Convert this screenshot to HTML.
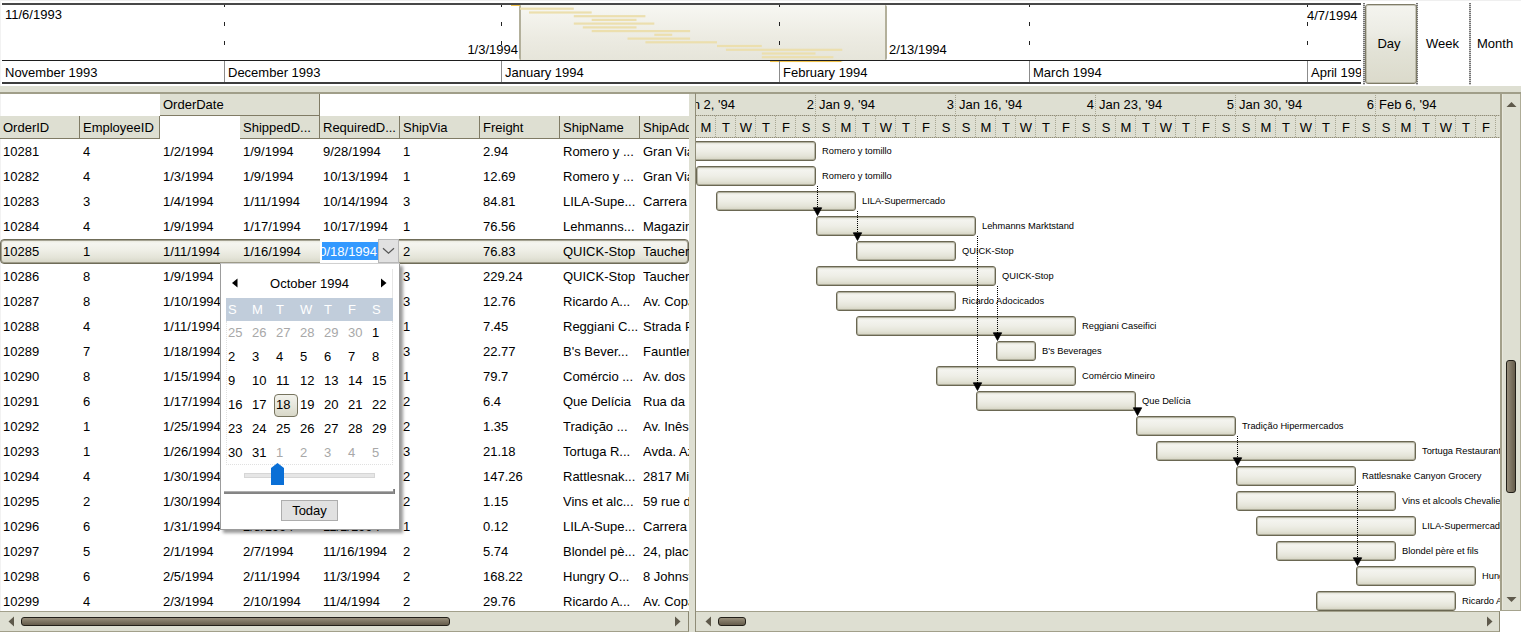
<!DOCTYPE html><html><head><meta charset="utf-8"><style>
*{margin:0;padding:0;box-sizing:border-box}
html,body{width:1521px;height:632px;overflow:hidden;background:#fff}
body{position:relative;font-family:"Liberation Sans", sans-serif;font-size:13px;color:#000}
.a{position:absolute}
.t{position:absolute;white-space:pre;line-height:15px}
.c{position:absolute;overflow:hidden;white-space:pre;line-height:25px;height:25px}
.bar{position:absolute;height:20px;border:1px solid #6a6752;border-radius:3px;box-shadow:inset 0 0 0 1px rgba(120,117,95,0.45);
background:linear-gradient(#dcdccf 0px,#f4f4ef 3px,#eeeee6 9px,#e4e4d8 14px,#d8d7c7 17px)}
.lbl{position:absolute;font-size:9.3px;line-height:11px;white-space:pre;color:#000}
.dh{position:absolute;width:1px;background:repeating-linear-gradient(#a8a692 0 1px,transparent 1px 2px)}
.dw{position:absolute;height:1px;background:repeating-linear-gradient(90deg,#8f8c78 0 1px,#c4c2b2 1px 2px)}
</style></head><body>

<div class="a" style="left:0;top:0;width:1521px;height:1px;background:#efefef"></div>
<div class="a" style="left:0;top:0;width:1px;height:632px;background:#f2f2f2"></div>
<div class="a" style="left:2px;top:3px;width:1359px;height:2px;background:#484848"></div>
<div class="a" style="left:519px;top:5px;width:368px;height:55px;border-left:2px solid #b3b09b;border-right:2px solid #b3b09b;border-radius:2px;background:linear-gradient(#f7f7f2,#ecebe2 60%,#e6e5da)"></div>
<svg class="a" style="left:0;top:0" width="1521" height="90"><rect x="520.1" y="7.6" width="53.7" height="2.2" fill="#ecdfae"/><rect x="529.0" y="11.4" width="62.7" height="2.2" fill="#ecdfae"/><rect x="573.8" y="15.1" width="71.6" height="2.2" fill="#ecdfae"/><rect x="591.7" y="18.8" width="44.8" height="2.2" fill="#ecdfae"/><rect x="573.8" y="22.5" width="80.5" height="2.2" fill="#ecdfae"/><rect x="582.8" y="26.3" width="53.7" height="2.2" fill="#ecdfae"/><rect x="591.7" y="30.0" width="98.4" height="2.2" fill="#ecdfae"/><rect x="654.3" y="33.7" width="17.9" height="2.2" fill="#ecdfae"/><rect x="627.5" y="37.5" width="62.6" height="2.2" fill="#ecdfae"/><rect x="645.4" y="41.2" width="71.6" height="2.2" fill="#ecdfae"/><rect x="717.0" y="44.9" width="44.8" height="2.2" fill="#ecdfae"/><rect x="725.9" y="48.7" width="116.4" height="2.2" fill="#ecdfae"/><rect x="761.8" y="52.4" width="53.7" height="2.2" fill="#ecdfae"/><rect x="761.8" y="56.1" width="71.6" height="2.2" fill="#ecdfae"/><rect x="770.7" y="59.9" width="71.6" height="2.2" fill="#ecdfae"/></svg>
<div class="a" style="left:511px;top:5px;width:9px;height:1px;background:#f1c24a"></div>
<div class="a" style="left:770px;top:61px;width:71px;height:1px;background:#f1c24a"></div>
<div class="a" style="left:224px;top:5px;width:1px;height:2px;background:#222"></div>
<div class="a" style="left:224px;top:22px;width:1px;height:4px;background:#222"></div>
<div class="a" style="left:224px;top:41px;width:1px;height:4px;background:#222"></div>
<div class="a" style="left:501px;top:5px;width:1px;height:2px;background:#222"></div>
<div class="a" style="left:501px;top:22px;width:1px;height:4px;background:#222"></div>
<div class="a" style="left:501px;top:41px;width:1px;height:4px;background:#222"></div>
<div class="a" style="left:779px;top:5px;width:1px;height:2px;background:#222"></div>
<div class="a" style="left:779px;top:22px;width:1px;height:4px;background:#222"></div>
<div class="a" style="left:779px;top:41px;width:1px;height:4px;background:#222"></div>
<div class="a" style="left:1029px;top:5px;width:1px;height:2px;background:#222"></div>
<div class="a" style="left:1029px;top:22px;width:1px;height:4px;background:#222"></div>
<div class="a" style="left:1029px;top:41px;width:1px;height:4px;background:#222"></div>
<div class="a" style="left:1307px;top:5px;width:1px;height:2px;background:#222"></div>
<div class="a" style="left:1307px;top:22px;width:1px;height:4px;background:#222"></div>
<div class="a" style="left:1307px;top:41px;width:1px;height:4px;background:#222"></div>
<div class="t" style="left:5px;top:7px">11/6/1993</div>
<div class="t" style="left:460px;top:42px;width:58px;text-align:right">1/3/1994</div>
<div class="t" style="left:889px;top:42px">2/13/1994</div>
<div class="t" style="left:1307px;top:8px">4/7/1994</div>
<div class="a" style="left:2px;top:60px;width:1359px;height:1px;background:#1e1e1e"></div>
<div class="a" style="left:2px;top:61px;width:1359px;height:21px;overflow:hidden">
<div class="t" style="left:3px;top:4px">November 1993</div>
<div class="a" style="left:222px;top:0;width:1px;height:21px;background:#8c8c8c"></div>
<div class="t" style="left:226px;top:4px">December 1993</div>
<div class="a" style="left:499px;top:0;width:1px;height:21px;background:#8c8c8c"></div>
<div class="t" style="left:503px;top:4px">January 1994</div>
<div class="a" style="left:777px;top:0;width:1px;height:21px;background:#8c8c8c"></div>
<div class="t" style="left:781px;top:4px">February 1994</div>
<div class="a" style="left:1027px;top:0;width:1px;height:21px;background:#8c8c8c"></div>
<div class="t" style="left:1031px;top:4px">March 1994</div>
<div class="a" style="left:1305px;top:0;width:1px;height:21px;background:#8c8c8c"></div>
<div class="t" style="left:1309px;top:4px">April 1994</div>
</div>
<div class="a" style="left:2px;top:82px;width:1359px;height:2px;background:#3c3c3c"></div>
<div class="a" style="left:1363px;top:3px;width:2px;height:82px;background:repeating-linear-gradient(#5a5a5a 0 1px,#c8c8c8 1px 2px);opacity:0.85"></div>
<div class="a" style="left:1416px;top:3px;width:2px;height:82px;background:repeating-linear-gradient(#5a5a5a 0 1px,#c8c8c8 1px 2px);opacity:0.85"></div>
<div class="a" style="left:1469px;top:3px;width:2px;height:82px;background:repeating-linear-gradient(#5a5a5a 0 1px,#c8c8c8 1px 2px);opacity:0.85"></div>
<div class="a" style="left:1365px;top:4px;width:52px;height:80px;border:1px solid #7f7c67;box-shadow:inset 0 0 0 1px rgba(127,124,103,0.35);border-radius:3px;background:linear-gradient(#f4f4ef,#ecece4 35%,#e2e2d6 60%,#dbdacb)"></div>
<div class="t" style="left:1363px;top:36px;width:52px;text-align:center">Day</div>
<div class="t" style="left:1426px;top:36px">Week</div>
<div class="t" style="left:1477px;top:36px">Month</div>
<div class="a" style="left:0;top:86px;width:1521px;height:6px;background:#dedfd2"></div>
<div class="a" style="left:0;top:92px;width:1521px;height:2px;background:#a09e89"></div>
<div class="a" style="left:0;top:93px;width:689px;height:518px;overflow:hidden">
<div class="a" style="left:160px;top:0;width:160px;height:23px;background:#dedfd2;border-right:1px solid #807b65;border-bottom:1px solid #807b65"></div>
<div class="t" style="left:163px;top:4px">OrderDate</div>
<div class="a" style="left:0px;top:23px;width:80px;height:23px;background:#dedfd2;border-right:1px solid #807b65;border-bottom:1px solid #807b65;overflow:hidden"><div class="t" style="left:3px;top:4px">OrderID</div></div>
<div class="a" style="left:80px;top:23px;width:80px;height:23px;background:#dedfd2;border-right:1px solid #807b65;border-bottom:1px solid #807b65;overflow:hidden"><div class="t" style="left:3px;top:4px">EmployeeID</div></div>
<div class="a" style="left:240px;top:23px;width:80px;height:23px;background:#dedfd2;border-right:1px solid #807b65;border-bottom:1px solid #807b65;overflow:hidden"><div class="t" style="left:3px;top:4px">ShippedD...</div></div>
<div class="a" style="left:320px;top:23px;width:80px;height:23px;background:#dedfd2;border-right:1px solid #807b65;border-bottom:1px solid #807b65;overflow:hidden"><div class="t" style="left:3px;top:4px">RequiredD...</div></div>
<div class="a" style="left:400px;top:23px;width:80px;height:23px;background:#dedfd2;border-right:1px solid #807b65;border-bottom:1px solid #807b65;overflow:hidden"><div class="t" style="left:3px;top:4px">ShipVia</div></div>
<div class="a" style="left:480px;top:23px;width:80px;height:23px;background:#dedfd2;border-right:1px solid #807b65;border-bottom:1px solid #807b65;overflow:hidden"><div class="t" style="left:3px;top:4px">Freight</div></div>
<div class="a" style="left:560px;top:23px;width:80px;height:23px;background:#dedfd2;border-right:1px solid #807b65;border-bottom:1px solid #807b65;overflow:hidden"><div class="t" style="left:3px;top:4px">ShipName</div></div>
<div class="a" style="left:640px;top:23px;width:80px;height:23px;background:#dedfd2;border-right:1px solid #807b65;border-bottom:1px solid #807b65;overflow:hidden"><div class="t" style="left:3px;top:4px">ShipAddress</div></div>
<div class="c" style="left:3px;top:46px;width:77px">10281</div>
<div class="c" style="left:83px;top:46px;width:77px">4</div>
<div class="c" style="left:163px;top:46px;width:77px">1/2/1994</div>
<div class="c" style="left:243px;top:46px;width:77px">1/9/1994</div>
<div class="c" style="left:323px;top:46px;width:77px">9/28/1994</div>
<div class="c" style="left:403px;top:46px;width:77px">1</div>
<div class="c" style="left:483px;top:46px;width:77px">2.94</div>
<div class="c" style="left:563px;top:46px;width:77px">Romero y ...</div>
<div class="c" style="left:643px;top:46px;width:77px">Gran Via, 1</div>
<div class="c" style="left:3px;top:71px;width:77px">10282</div>
<div class="c" style="left:83px;top:71px;width:77px">4</div>
<div class="c" style="left:163px;top:71px;width:77px">1/3/1994</div>
<div class="c" style="left:243px;top:71px;width:77px">1/9/1994</div>
<div class="c" style="left:323px;top:71px;width:77px">10/13/1994</div>
<div class="c" style="left:403px;top:71px;width:77px">1</div>
<div class="c" style="left:483px;top:71px;width:77px">12.69</div>
<div class="c" style="left:563px;top:71px;width:77px">Romero y ...</div>
<div class="c" style="left:643px;top:71px;width:77px">Gran Via, 1</div>
<div class="c" style="left:3px;top:96px;width:77px">10283</div>
<div class="c" style="left:83px;top:96px;width:77px">3</div>
<div class="c" style="left:163px;top:96px;width:77px">1/4/1994</div>
<div class="c" style="left:243px;top:96px;width:77px">1/11/1994</div>
<div class="c" style="left:323px;top:96px;width:77px">10/14/1994</div>
<div class="c" style="left:403px;top:96px;width:77px">3</div>
<div class="c" style="left:483px;top:96px;width:77px">84.81</div>
<div class="c" style="left:563px;top:96px;width:77px">LILA-Supe...</div>
<div class="c" style="left:643px;top:96px;width:77px">Carrera 52</div>
<div class="c" style="left:3px;top:121px;width:77px">10284</div>
<div class="c" style="left:83px;top:121px;width:77px">4</div>
<div class="c" style="left:163px;top:121px;width:77px">1/9/1994</div>
<div class="c" style="left:243px;top:121px;width:77px">1/17/1994</div>
<div class="c" style="left:323px;top:121px;width:77px">10/17/1994</div>
<div class="c" style="left:403px;top:121px;width:77px">1</div>
<div class="c" style="left:483px;top:121px;width:77px">76.56</div>
<div class="c" style="left:563px;top:121px;width:77px">Lehmanns...</div>
<div class="c" style="left:643px;top:121px;width:77px">Magazinweg</div>
<div class="a" style="left:0;top:146px;width:689px;height:25px;border:1px solid #6f6c58;border-radius:4px;box-shadow:inset 0 0 0 1px rgba(111,108,88,0.55);background:linear-gradient(#e4e4d8 0,#f5f5f0 3px,#efefe7 10px,#e3e3d7 18px,#d6d5c5 23px)"></div>
<div class="c" style="left:3px;top:146px;width:77px">10285</div>
<div class="c" style="left:83px;top:146px;width:77px">1</div>
<div class="c" style="left:163px;top:146px;width:77px">1/11/1994</div>
<div class="c" style="left:243px;top:146px;width:77px">1/16/1994</div>
<div class="c" style="left:323px;top:146px;width:77px">10/18/1994</div>
<div class="c" style="left:403px;top:146px;width:77px">2</div>
<div class="c" style="left:483px;top:146px;width:77px">76.83</div>
<div class="c" style="left:563px;top:146px;width:77px">QUICK-Stop</div>
<div class="c" style="left:643px;top:146px;width:77px">Taucherstr</div>
<div class="c" style="left:3px;top:171px;width:77px">10286</div>
<div class="c" style="left:83px;top:171px;width:77px">8</div>
<div class="c" style="left:163px;top:171px;width:77px">1/9/1994</div>
<div class="c" style="left:243px;top:171px;width:77px">1/18/1994</div>
<div class="c" style="left:323px;top:171px;width:77px">10/19/1994</div>
<div class="c" style="left:403px;top:171px;width:77px">3</div>
<div class="c" style="left:483px;top:171px;width:77px">229.24</div>
<div class="c" style="left:563px;top:171px;width:77px">QUICK-Stop</div>
<div class="c" style="left:643px;top:171px;width:77px">Taucherstr</div>
<div class="c" style="left:3px;top:196px;width:77px">10287</div>
<div class="c" style="left:83px;top:196px;width:77px">8</div>
<div class="c" style="left:163px;top:196px;width:77px">1/10/1994</div>
<div class="c" style="left:243px;top:196px;width:77px">1/16/1994</div>
<div class="c" style="left:323px;top:196px;width:77px">10/20/1994</div>
<div class="c" style="left:403px;top:196px;width:77px">3</div>
<div class="c" style="left:483px;top:196px;width:77px">12.76</div>
<div class="c" style="left:563px;top:196px;width:77px">Ricardo A...</div>
<div class="c" style="left:643px;top:196px;width:77px">Av. Copacab</div>
<div class="c" style="left:3px;top:221px;width:77px">10288</div>
<div class="c" style="left:83px;top:221px;width:77px">4</div>
<div class="c" style="left:163px;top:221px;width:77px">1/11/1994</div>
<div class="c" style="left:243px;top:221px;width:77px">1/22/1994</div>
<div class="c" style="left:323px;top:221px;width:77px">10/21/1994</div>
<div class="c" style="left:403px;top:221px;width:77px">1</div>
<div class="c" style="left:483px;top:221px;width:77px">7.45</div>
<div class="c" style="left:563px;top:221px;width:77px">Reggiani C...</div>
<div class="c" style="left:643px;top:221px;width:77px">Strada Prov</div>
<div class="c" style="left:3px;top:246px;width:77px">10289</div>
<div class="c" style="left:83px;top:246px;width:77px">7</div>
<div class="c" style="left:163px;top:246px;width:77px">1/18/1994</div>
<div class="c" style="left:243px;top:246px;width:77px">1/20/1994</div>
<div class="c" style="left:323px;top:246px;width:77px">10/24/1994</div>
<div class="c" style="left:403px;top:246px;width:77px">3</div>
<div class="c" style="left:483px;top:246px;width:77px">22.77</div>
<div class="c" style="left:563px;top:246px;width:77px">B's Bever...</div>
<div class="c" style="left:643px;top:246px;width:77px">Fauntleroy</div>
<div class="c" style="left:3px;top:271px;width:77px">10290</div>
<div class="c" style="left:83px;top:271px;width:77px">8</div>
<div class="c" style="left:163px;top:271px;width:77px">1/15/1994</div>
<div class="c" style="left:243px;top:271px;width:77px">1/22/1994</div>
<div class="c" style="left:323px;top:271px;width:77px">10/25/1994</div>
<div class="c" style="left:403px;top:271px;width:77px">1</div>
<div class="c" style="left:483px;top:271px;width:77px">79.7</div>
<div class="c" style="left:563px;top:271px;width:77px">Comércio ...</div>
<div class="c" style="left:643px;top:271px;width:77px">Av. dos Lus</div>
<div class="c" style="left:3px;top:296px;width:77px">10291</div>
<div class="c" style="left:83px;top:296px;width:77px">6</div>
<div class="c" style="left:163px;top:296px;width:77px">1/17/1994</div>
<div class="c" style="left:243px;top:296px;width:77px">1/25/1994</div>
<div class="c" style="left:323px;top:296px;width:77px">10/26/1994</div>
<div class="c" style="left:403px;top:296px;width:77px">2</div>
<div class="c" style="left:483px;top:296px;width:77px">6.4</div>
<div class="c" style="left:563px;top:296px;width:77px">Que Delícia</div>
<div class="c" style="left:643px;top:296px;width:77px">Rua da Pan</div>
<div class="c" style="left:3px;top:321px;width:77px">10292</div>
<div class="c" style="left:83px;top:321px;width:77px">1</div>
<div class="c" style="left:163px;top:321px;width:77px">1/25/1994</div>
<div class="c" style="left:243px;top:321px;width:77px">1/30/1994</div>
<div class="c" style="left:323px;top:321px;width:77px">10/27/1994</div>
<div class="c" style="left:403px;top:321px;width:77px">2</div>
<div class="c" style="left:483px;top:321px;width:77px">1.35</div>
<div class="c" style="left:563px;top:321px;width:77px">Tradição ...</div>
<div class="c" style="left:643px;top:321px;width:77px">Av. Inês de</div>
<div class="c" style="left:3px;top:346px;width:77px">10293</div>
<div class="c" style="left:83px;top:346px;width:77px">1</div>
<div class="c" style="left:163px;top:346px;width:77px">1/26/1994</div>
<div class="c" style="left:243px;top:346px;width:77px">2/8/1994</div>
<div class="c" style="left:323px;top:346px;width:77px">10/28/1994</div>
<div class="c" style="left:403px;top:346px;width:77px">3</div>
<div class="c" style="left:483px;top:346px;width:77px">21.18</div>
<div class="c" style="left:563px;top:346px;width:77px">Tortuga R...</div>
<div class="c" style="left:643px;top:346px;width:77px">Avda. Azteca</div>
<div class="c" style="left:3px;top:371px;width:77px">10294</div>
<div class="c" style="left:83px;top:371px;width:77px">4</div>
<div class="c" style="left:163px;top:371px;width:77px">1/30/1994</div>
<div class="c" style="left:243px;top:371px;width:77px">2/5/1994</div>
<div class="c" style="left:323px;top:371px;width:77px">10/31/1994</div>
<div class="c" style="left:403px;top:371px;width:77px">2</div>
<div class="c" style="left:483px;top:371px;width:77px">147.26</div>
<div class="c" style="left:563px;top:371px;width:77px">Rattlesnak...</div>
<div class="c" style="left:643px;top:371px;width:77px">2817 Milton</div>
<div class="c" style="left:3px;top:396px;width:77px">10295</div>
<div class="c" style="left:83px;top:396px;width:77px">2</div>
<div class="c" style="left:163px;top:396px;width:77px">1/30/1994</div>
<div class="c" style="left:243px;top:396px;width:77px">2/7/1994</div>
<div class="c" style="left:323px;top:396px;width:77px">11/1/1994</div>
<div class="c" style="left:403px;top:396px;width:77px">2</div>
<div class="c" style="left:483px;top:396px;width:77px">1.15</div>
<div class="c" style="left:563px;top:396px;width:77px">Vins et alc...</div>
<div class="c" style="left:643px;top:396px;width:77px">59 rue de l</div>
<div class="c" style="left:3px;top:421px;width:77px">10296</div>
<div class="c" style="left:83px;top:421px;width:77px">6</div>
<div class="c" style="left:163px;top:421px;width:77px">1/31/1994</div>
<div class="c" style="left:243px;top:421px;width:77px">2/8/1994</div>
<div class="c" style="left:323px;top:421px;width:77px">11/1/1994</div>
<div class="c" style="left:403px;top:421px;width:77px">1</div>
<div class="c" style="left:483px;top:421px;width:77px">0.12</div>
<div class="c" style="left:563px;top:421px;width:77px">LILA-Supe...</div>
<div class="c" style="left:643px;top:421px;width:77px">Carrera 52</div>
<div class="c" style="left:3px;top:446px;width:77px">10297</div>
<div class="c" style="left:83px;top:446px;width:77px">5</div>
<div class="c" style="left:163px;top:446px;width:77px">2/1/1994</div>
<div class="c" style="left:243px;top:446px;width:77px">2/7/1994</div>
<div class="c" style="left:323px;top:446px;width:77px">11/16/1994</div>
<div class="c" style="left:403px;top:446px;width:77px">2</div>
<div class="c" style="left:483px;top:446px;width:77px">5.74</div>
<div class="c" style="left:563px;top:446px;width:77px">Blondel pè...</div>
<div class="c" style="left:643px;top:446px;width:77px">24, place K</div>
<div class="c" style="left:3px;top:471px;width:77px">10298</div>
<div class="c" style="left:83px;top:471px;width:77px">6</div>
<div class="c" style="left:163px;top:471px;width:77px">2/5/1994</div>
<div class="c" style="left:243px;top:471px;width:77px">2/11/1994</div>
<div class="c" style="left:323px;top:471px;width:77px">11/3/1994</div>
<div class="c" style="left:403px;top:471px;width:77px">2</div>
<div class="c" style="left:483px;top:471px;width:77px">168.22</div>
<div class="c" style="left:563px;top:471px;width:77px">Hungry O...</div>
<div class="c" style="left:643px;top:471px;width:77px">8 Johnstown</div>
<div class="c" style="left:3px;top:496px;width:77px">10299</div>
<div class="c" style="left:83px;top:496px;width:77px">4</div>
<div class="c" style="left:163px;top:496px;width:77px">2/3/1994</div>
<div class="c" style="left:243px;top:496px;width:77px">2/10/1994</div>
<div class="c" style="left:323px;top:496px;width:77px">11/4/1994</div>
<div class="c" style="left:403px;top:496px;width:77px">2</div>
<div class="c" style="left:483px;top:496px;width:77px">29.76</div>
<div class="c" style="left:563px;top:496px;width:77px">Ricardo A...</div>
<div class="c" style="left:643px;top:496px;width:77px">Av. Copacab</div>
</div>
<div class="a" style="left:689px;top:93px;width:6px;height:539px;background:#dedfd2"></div>
<div class="a" style="left:695px;top:93px;width:1px;height:539px;background:#8a8772"></div>
<div class="a" style="left:696px;top:93px;width:804px;height:518px;overflow:hidden">
<div class="a" style="left:0;top:0;width:804px;height:45px;background:#dedfd2"></div>
<div class="t" style="left:-17px;top:4px">Jan 2, '94</div>
<div class="t" style="left:80px;top:4px;width:38px;text-align:right">2</div>
<div class="dh" style="left:119px;top:0;height:23px"></div>
<div class="t" style="left:123px;top:4px">Jan 9, '94</div>
<div class="t" style="left:220px;top:4px;width:38px;text-align:right">3</div>
<div class="dh" style="left:259px;top:0;height:23px"></div>
<div class="t" style="left:263px;top:4px">Jan 16, '94</div>
<div class="t" style="left:360px;top:4px;width:38px;text-align:right">4</div>
<div class="dh" style="left:399px;top:0;height:23px"></div>
<div class="t" style="left:403px;top:4px">Jan 23, '94</div>
<div class="t" style="left:500px;top:4px;width:38px;text-align:right">5</div>
<div class="dh" style="left:539px;top:0;height:23px"></div>
<div class="t" style="left:543px;top:4px">Jan 30, '94</div>
<div class="t" style="left:640px;top:4px;width:38px;text-align:right">6</div>
<div class="dh" style="left:679px;top:0;height:23px"></div>
<div class="t" style="left:683px;top:4px">Feb 6, '94</div>
<div class="t" style="left:780px;top:4px;width:38px;text-align:right">7</div>
<div class="dw" style="left:0;top:22px;width:804px"></div>
<div class="t" style="left:-20px;top:27px;width:20px;text-align:center">S</div>
<div class="dh" style="left:-1px;top:23px;height:22px"></div>
<div class="t" style="left:0px;top:27px;width:20px;text-align:center">M</div>
<div class="dh" style="left:19px;top:23px;height:22px"></div>
<div class="t" style="left:20px;top:27px;width:20px;text-align:center">T</div>
<div class="dh" style="left:39px;top:23px;height:22px"></div>
<div class="t" style="left:40px;top:27px;width:20px;text-align:center">W</div>
<div class="dh" style="left:59px;top:23px;height:22px"></div>
<div class="t" style="left:60px;top:27px;width:20px;text-align:center">T</div>
<div class="dh" style="left:79px;top:23px;height:22px"></div>
<div class="t" style="left:80px;top:27px;width:20px;text-align:center">F</div>
<div class="dh" style="left:99px;top:23px;height:22px"></div>
<div class="t" style="left:100px;top:27px;width:20px;text-align:center">S</div>
<div class="dh" style="left:119px;top:23px;height:22px"></div>
<div class="t" style="left:120px;top:27px;width:20px;text-align:center">S</div>
<div class="dh" style="left:139px;top:23px;height:22px"></div>
<div class="t" style="left:140px;top:27px;width:20px;text-align:center">M</div>
<div class="dh" style="left:159px;top:23px;height:22px"></div>
<div class="t" style="left:160px;top:27px;width:20px;text-align:center">T</div>
<div class="dh" style="left:179px;top:23px;height:22px"></div>
<div class="t" style="left:180px;top:27px;width:20px;text-align:center">W</div>
<div class="dh" style="left:199px;top:23px;height:22px"></div>
<div class="t" style="left:200px;top:27px;width:20px;text-align:center">T</div>
<div class="dh" style="left:219px;top:23px;height:22px"></div>
<div class="t" style="left:220px;top:27px;width:20px;text-align:center">F</div>
<div class="dh" style="left:239px;top:23px;height:22px"></div>
<div class="t" style="left:240px;top:27px;width:20px;text-align:center">S</div>
<div class="dh" style="left:259px;top:23px;height:22px"></div>
<div class="t" style="left:260px;top:27px;width:20px;text-align:center">S</div>
<div class="dh" style="left:279px;top:23px;height:22px"></div>
<div class="t" style="left:280px;top:27px;width:20px;text-align:center">M</div>
<div class="dh" style="left:299px;top:23px;height:22px"></div>
<div class="t" style="left:300px;top:27px;width:20px;text-align:center">T</div>
<div class="dh" style="left:319px;top:23px;height:22px"></div>
<div class="t" style="left:320px;top:27px;width:20px;text-align:center">W</div>
<div class="dh" style="left:339px;top:23px;height:22px"></div>
<div class="t" style="left:340px;top:27px;width:20px;text-align:center">T</div>
<div class="dh" style="left:359px;top:23px;height:22px"></div>
<div class="t" style="left:360px;top:27px;width:20px;text-align:center">F</div>
<div class="dh" style="left:379px;top:23px;height:22px"></div>
<div class="t" style="left:380px;top:27px;width:20px;text-align:center">S</div>
<div class="dh" style="left:399px;top:23px;height:22px"></div>
<div class="t" style="left:400px;top:27px;width:20px;text-align:center">S</div>
<div class="dh" style="left:419px;top:23px;height:22px"></div>
<div class="t" style="left:420px;top:27px;width:20px;text-align:center">M</div>
<div class="dh" style="left:439px;top:23px;height:22px"></div>
<div class="t" style="left:440px;top:27px;width:20px;text-align:center">T</div>
<div class="dh" style="left:459px;top:23px;height:22px"></div>
<div class="t" style="left:460px;top:27px;width:20px;text-align:center">W</div>
<div class="dh" style="left:479px;top:23px;height:22px"></div>
<div class="t" style="left:480px;top:27px;width:20px;text-align:center">T</div>
<div class="dh" style="left:499px;top:23px;height:22px"></div>
<div class="t" style="left:500px;top:27px;width:20px;text-align:center">F</div>
<div class="dh" style="left:519px;top:23px;height:22px"></div>
<div class="t" style="left:520px;top:27px;width:20px;text-align:center">S</div>
<div class="dh" style="left:539px;top:23px;height:22px"></div>
<div class="t" style="left:540px;top:27px;width:20px;text-align:center">S</div>
<div class="dh" style="left:559px;top:23px;height:22px"></div>
<div class="t" style="left:560px;top:27px;width:20px;text-align:center">M</div>
<div class="dh" style="left:579px;top:23px;height:22px"></div>
<div class="t" style="left:580px;top:27px;width:20px;text-align:center">T</div>
<div class="dh" style="left:599px;top:23px;height:22px"></div>
<div class="t" style="left:600px;top:27px;width:20px;text-align:center">W</div>
<div class="dh" style="left:619px;top:23px;height:22px"></div>
<div class="t" style="left:620px;top:27px;width:20px;text-align:center">T</div>
<div class="dh" style="left:639px;top:23px;height:22px"></div>
<div class="t" style="left:640px;top:27px;width:20px;text-align:center">F</div>
<div class="dh" style="left:659px;top:23px;height:22px"></div>
<div class="t" style="left:660px;top:27px;width:20px;text-align:center">S</div>
<div class="dh" style="left:679px;top:23px;height:22px"></div>
<div class="t" style="left:680px;top:27px;width:20px;text-align:center">S</div>
<div class="dh" style="left:699px;top:23px;height:22px"></div>
<div class="t" style="left:700px;top:27px;width:20px;text-align:center">M</div>
<div class="dh" style="left:719px;top:23px;height:22px"></div>
<div class="t" style="left:720px;top:27px;width:20px;text-align:center">T</div>
<div class="dh" style="left:739px;top:23px;height:22px"></div>
<div class="t" style="left:740px;top:27px;width:20px;text-align:center">W</div>
<div class="dh" style="left:759px;top:23px;height:22px"></div>
<div class="t" style="left:760px;top:27px;width:20px;text-align:center">T</div>
<div class="dh" style="left:779px;top:23px;height:22px"></div>
<div class="t" style="left:780px;top:27px;width:20px;text-align:center">F</div>
<div class="dh" style="left:799px;top:23px;height:22px"></div>
<div class="t" style="left:800px;top:27px;width:20px;text-align:center">S</div>
<div class="dh" style="left:819px;top:23px;height:22px"></div>
<div class="t" style="left:820px;top:27px;width:20px;text-align:center">S</div>
<div class="dw" style="left:0;top:44px;width:804px"></div>
<div class="bar" style="left:-20px;top:48px;width:140px"></div>
<div class="lbl" style="left:126px;top:53px">Romero y tomillo</div>
<div class="bar" style="left:0px;top:73px;width:120px"></div>
<div class="lbl" style="left:126px;top:78px">Romero y tomillo</div>
<div class="bar" style="left:20px;top:98px;width:140px"></div>
<div class="lbl" style="left:166px;top:103px">LILA-Supermercado</div>
<div class="bar" style="left:120px;top:123px;width:160px"></div>
<div class="lbl" style="left:286px;top:128px">Lehmanns Marktstand</div>
<div class="bar" style="left:160px;top:148px;width:100px"></div>
<div class="lbl" style="left:266px;top:153px">QUICK-Stop</div>
<div class="bar" style="left:120px;top:173px;width:180px"></div>
<div class="lbl" style="left:306px;top:178px">QUICK-Stop</div>
<div class="bar" style="left:140px;top:198px;width:120px"></div>
<div class="lbl" style="left:266px;top:203px">Ricardo Adocicados</div>
<div class="bar" style="left:160px;top:223px;width:220px"></div>
<div class="lbl" style="left:386px;top:228px">Reggiani Caseifici</div>
<div class="bar" style="left:300px;top:248px;width:40px"></div>
<div class="lbl" style="left:346px;top:253px">B's Beverages</div>
<div class="bar" style="left:240px;top:273px;width:140px"></div>
<div class="lbl" style="left:386px;top:278px">Comércio Mineiro</div>
<div class="bar" style="left:280px;top:298px;width:160px"></div>
<div class="lbl" style="left:446px;top:303px">Que Delícia</div>
<div class="bar" style="left:440px;top:323px;width:100px"></div>
<div class="lbl" style="left:546px;top:328px">Tradição Hipermercados</div>
<div class="bar" style="left:460px;top:348px;width:260px"></div>
<div class="lbl" style="left:726px;top:353px">Tortuga Restaurante</div>
<div class="bar" style="left:540px;top:373px;width:120px"></div>
<div class="lbl" style="left:666px;top:378px">Rattlesnake Canyon Grocery</div>
<div class="bar" style="left:540px;top:398px;width:160px"></div>
<div class="lbl" style="left:706px;top:403px">Vins et alcools Chevalier</div>
<div class="bar" style="left:560px;top:423px;width:160px"></div>
<div class="lbl" style="left:726px;top:428px">LILA-Supermercado</div>
<div class="bar" style="left:580px;top:448px;width:120px"></div>
<div class="lbl" style="left:706px;top:453px">Blondel père et fils</div>
<div class="bar" style="left:660px;top:473px;width:120px"></div>
<div class="lbl" style="left:786px;top:478px">Hungry Owl All-Night Grocers</div>
<div class="bar" style="left:620px;top:498px;width:140px"></div>
<div class="lbl" style="left:766px;top:503px">Ricardo Adocicados</div>
<div class="a" style="left:121px;top:93px;width:1px;height:22px;background:repeating-linear-gradient(#000 0 1px,transparent 1px 2px)"></div>
<svg class="a" style="left:116px;top:114px" width="11" height="10"><path d="M1.3 0.8 L9.7 0.8 L5.5 8.5 Z" fill="#000" stroke="#000" stroke-width="0.8" stroke-linejoin="round"/></svg>
<div class="a" style="left:161px;top:118px;width:1px;height:22px;background:repeating-linear-gradient(#000 0 1px,transparent 1px 2px)"></div>
<svg class="a" style="left:156px;top:139px" width="11" height="10"><path d="M1.3 0.8 L9.7 0.8 L5.5 8.5 Z" fill="#000" stroke="#000" stroke-width="0.8" stroke-linejoin="round"/></svg>
<div class="a" style="left:281px;top:143px;width:1px;height:147px;background:repeating-linear-gradient(#000 0 1px,transparent 1px 2px)"></div>
<svg class="a" style="left:276px;top:289px" width="11" height="10"><path d="M1.3 0.8 L9.7 0.8 L5.5 8.5 Z" fill="#000" stroke="#000" stroke-width="0.8" stroke-linejoin="round"/></svg>
<div class="a" style="left:301px;top:193px;width:1px;height:47px;background:repeating-linear-gradient(#000 0 1px,transparent 1px 2px)"></div>
<svg class="a" style="left:296px;top:239px" width="11" height="10"><path d="M1.3 0.8 L9.7 0.8 L5.5 8.5 Z" fill="#000" stroke="#000" stroke-width="0.8" stroke-linejoin="round"/></svg>
<div class="a" style="left:441px;top:318px;width:1px;height:-3px;background:repeating-linear-gradient(#000 0 1px,transparent 1px 2px)"></div>
<svg class="a" style="left:436px;top:314px" width="11" height="10"><path d="M1.3 0.8 L9.7 0.8 L5.5 8.5 Z" fill="#000" stroke="#000" stroke-width="0.8" stroke-linejoin="round"/></svg>
<div class="a" style="left:541px;top:343px;width:1px;height:22px;background:repeating-linear-gradient(#000 0 1px,transparent 1px 2px)"></div>
<svg class="a" style="left:536px;top:364px" width="11" height="10"><path d="M1.3 0.8 L9.7 0.8 L5.5 8.5 Z" fill="#000" stroke="#000" stroke-width="0.8" stroke-linejoin="round"/></svg>
<div class="a" style="left:661px;top:393px;width:1px;height:72px;background:repeating-linear-gradient(#000 0 1px,transparent 1px 2px)"></div>
<svg class="a" style="left:656px;top:464px" width="11" height="10"><path d="M1.3 0.8 L9.7 0.8 L5.5 8.5 Z" fill="#000" stroke="#000" stroke-width="0.8" stroke-linejoin="round"/></svg>
</div>
<div class="a" style="left:1500px;top:93px;width:21px;height:518px;background:#dedfd2;border-left:2px solid #a3a08a;border-right:1px solid #aeac97;border-bottom:1px solid #a5a38e;box-shadow:inset 1px 0 0 #e8e8dd"></div>
<svg class="a" style="left:1506px;top:101px" width="11" height="7"><path d="M0.5 6 L5.5 1 L10.5 6 Z" fill="#5e594b"/></svg>
<svg class="a" style="left:1506px;top:596px" width="11" height="7"><path d="M0.5 1 L5.5 6 L10.5 1 Z" fill="#5e594b"/></svg>
<div class="a" style="left:1506px;top:360px;width:10px;height:133px;border:1px solid #221f18;border-radius:3px;background:linear-gradient(90deg,#978e7b,#7d7462 50%,#655c4b)"></div>
<div class="a" style="left:0px;top:611px;width:689px;height:21px;background:#dedfd2;border-top:1px solid #a2a08b;border-bottom:1px solid #a2a08b;border-right:1px solid #8a8772"></div>
<div class="a" style="left:696px;top:611px;width:804px;height:21px;background:#dedfd2;border-top:1px solid #a2a08b;border-bottom:1px solid #a2a08b;border-right:1px solid #8a8772"></div>
<svg class="a" style="left:7px;top:616px" width="8" height="11"><path d="M7 0.5 L1.5 5.5 L7 10.5 Z" fill="#5e594b"/></svg>
<svg class="a" style="left:674px;top:616px" width="8" height="11"><path d="M1 0.5 L6.5 5.5 L1 10.5 Z" fill="#5e594b"/></svg>
<svg class="a" style="left:704px;top:616px" width="8" height="11"><path d="M7 0.5 L1.5 5.5 L7 10.5 Z" fill="#5e594b"/></svg>
<svg class="a" style="left:1486px;top:616px" width="8" height="11"><path d="M1 0.5 L6.5 5.5 L1 10.5 Z" fill="#5e594b"/></svg>
<div class="a" style="left:21px;top:617px;width:429px;height:9px;border:1px solid #221f18;border-radius:3px;background:linear-gradient(#978e7b,#7d7462 50%,#655c4b)"></div>
<div class="a" style="left:718px;top:617px;width:28px;height:9px;border:1px solid #221f18;border-radius:3px;background:linear-gradient(#978e7b,#7d7462 50%,#655c4b)"></div>
<div class="a" style="left:320px;top:238px;width:79px;height:26px;background:#fff;overflow:hidden;border-bottom:1px solid #c4c4c4">
<div class="a" style="left:2px;top:4px;width:56px;height:18px;background:#3399ff"></div>
<div class="a" style="left:2px;top:0;width:56px;height:26px;overflow:hidden"><div class="t" style="left:-10px;top:6px;color:#fff">10/18/1994</div></div>
<div class="a" style="left:58px;top:1px;width:21px;height:24px;background:#e1e1e1;border:1px solid #b8b8b8"></div>
<svg class="a" style="left:62px;top:9px" width="13" height="8"><path d="M1 1.2 L6.5 6.2 L12 1.2" stroke="#555" stroke-width="1.2" fill="none"/></svg>
</div>
<div class="a" style="left:220px;top:263px;width:180px;height:267px;background:#fff;border:1px solid #9c9c9c;border-top:1px solid #d0d0d0;box-shadow:3px 3px 3px rgba(0,0,0,0.4)"></div>
<div class="a" style="left:392px;top:269px;width:1px;height:29px;background:#e6e6e6"></div>
<svg class="a" style="left:231px;top:278px" width="8" height="11"><path d="M6.5 0.5 L1 5 L6.5 9.5 Z" fill="#000"/></svg>
<svg class="a" style="left:380px;top:278px" width="8" height="11"><path d="M1 0.5 L6.5 5 L1 9.5 Z" fill="#000"/></svg>
<div class="t" style="left:226px;top:276px;width:167px;text-align:center">October 1994</div>
<div class="a" style="left:226px;top:298px;width:167px;height:23px;background:#c1cddb"></div>
<div class="t" style="left:228px;top:302px;color:#fff">S</div>
<div class="t" style="left:252px;top:302px;color:#fff">M</div>
<div class="t" style="left:276px;top:302px;color:#fff">T</div>
<div class="t" style="left:300px;top:302px;color:#fff">W</div>
<div class="t" style="left:324px;top:302px;color:#fff">T</div>
<div class="t" style="left:348px;top:302px;color:#fff">F</div>
<div class="t" style="left:372px;top:302px;color:#fff">S</div>
<div class="t" style="left:228px;top:325px;color:#a8a8a8">25</div>
<div class="t" style="left:252px;top:325px;color:#a8a8a8">26</div>
<div class="t" style="left:276px;top:325px;color:#a8a8a8">27</div>
<div class="t" style="left:300px;top:325px;color:#a8a8a8">28</div>
<div class="t" style="left:324px;top:325px;color:#a8a8a8">29</div>
<div class="t" style="left:348px;top:325px;color:#a8a8a8">30</div>
<div class="t" style="left:372px;top:325px;color:#000">1</div>
<div class="t" style="left:228px;top:349px;color:#000">2</div>
<div class="t" style="left:252px;top:349px;color:#000">3</div>
<div class="t" style="left:276px;top:349px;color:#000">4</div>
<div class="t" style="left:300px;top:349px;color:#000">5</div>
<div class="t" style="left:324px;top:349px;color:#000">6</div>
<div class="t" style="left:348px;top:349px;color:#000">7</div>
<div class="t" style="left:372px;top:349px;color:#000">8</div>
<div class="t" style="left:228px;top:373px;color:#000">9</div>
<div class="t" style="left:252px;top:373px;color:#000">10</div>
<div class="t" style="left:276px;top:373px;color:#000">11</div>
<div class="t" style="left:300px;top:373px;color:#000">12</div>
<div class="t" style="left:324px;top:373px;color:#000">13</div>
<div class="t" style="left:348px;top:373px;color:#000">14</div>
<div class="t" style="left:372px;top:373px;color:#000">15</div>
<div class="t" style="left:228px;top:397px;color:#000">16</div>
<div class="t" style="left:252px;top:397px;color:#000">17</div>
<div class="a" style="left:274px;top:394px;width:24px;height:23px;border:1px solid #77745f;border-radius:4px;background:linear-gradient(#f2f2ec,#e4e4d8 60%,#d8d7c8)"></div>
<div class="t" style="left:276px;top:397px;color:#000">18</div>
<div class="t" style="left:300px;top:397px;color:#000">19</div>
<div class="t" style="left:324px;top:397px;color:#000">20</div>
<div class="t" style="left:348px;top:397px;color:#000">21</div>
<div class="t" style="left:372px;top:397px;color:#000">22</div>
<div class="t" style="left:228px;top:421px;color:#000">23</div>
<div class="t" style="left:252px;top:421px;color:#000">24</div>
<div class="t" style="left:276px;top:421px;color:#000">25</div>
<div class="t" style="left:300px;top:421px;color:#000">26</div>
<div class="t" style="left:324px;top:421px;color:#000">27</div>
<div class="t" style="left:348px;top:421px;color:#000">28</div>
<div class="t" style="left:372px;top:421px;color:#000">29</div>
<div class="t" style="left:228px;top:445px;color:#000">30</div>
<div class="t" style="left:252px;top:445px;color:#000">31</div>
<div class="t" style="left:276px;top:445px;color:#a8a8a8">1</div>
<div class="t" style="left:300px;top:445px;color:#a8a8a8">2</div>
<div class="t" style="left:324px;top:445px;color:#a8a8a8">3</div>
<div class="t" style="left:348px;top:445px;color:#a8a8a8">4</div>
<div class="t" style="left:372px;top:445px;color:#a8a8a8">5</div>
<div class="a" style="left:226px;top:321px;width:167px;height:144px;border:1px dotted #e0e0e0;border-top:none"></div>
<div class="a" style="left:244px;top:473px;width:131px;height:5px;background:#e6e6e6;border:1px solid #d6d6d6"></div>
<svg class="a" style="left:271px;top:463px" width="13" height="22"><path d="M0 5 L6.5 0 L13 5 L13 22 L0 22 Z" fill="#0a6fd6"/></svg>
<div class="a" style="left:224px;top:491px;width:171px;height:3px;background:linear-gradient(#c4c4c4,#7a7a7a 60%,#8a8a8a)"></div>
<div class="a" style="left:393px;top:489px;width:2px;height:5px;background:linear-gradient(90deg,#9a9a9a,#6e6e6e)"></div>
<div class="a" style="left:281px;top:500px;width:57px;height:21px;background:#e1e1e1;border:1px solid #adadad"></div>
<div class="t" style="left:281px;top:503px;width:57px;text-align:center">Today</div>
<div class="a" style="left:0;top:92px;width:1521px;height:2px;background:#a09e89"></div>
<div class="a" style="left:695px;top:93px;width:1px;height:539px;background:#8f8c77"></div>
</body></html>
